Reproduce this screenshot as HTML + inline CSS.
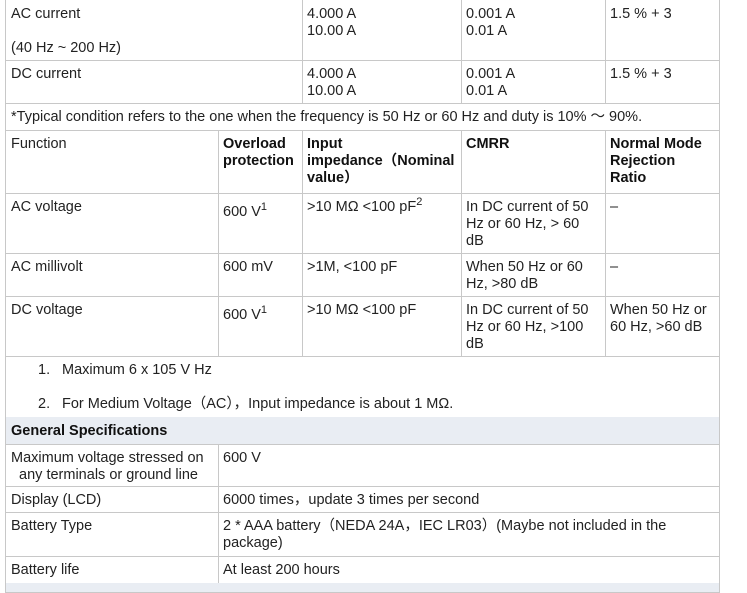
<!DOCTYPE html>
<html><head><meta charset="utf-8"><style>
body{margin:0;width:747px;height:585px;background:#fff;position:relative;overflow:hidden;font-family:"Liberation Sans","Noto Sans CJK SC",sans-serif;font-size:14.5px;line-height:17px;color:#222;white-space:nowrap}
.c{position:absolute;box-sizing:border-box;border-right:1px solid #c8c8c8;border-bottom:1px solid #c8c8c8;padding:6px 0 0 5px;overflow:hidden}
.l{border-left:1px solid #c8c8c8}
b{font-weight:bold;color:#111}
sup{font-size:11px;line-height:0;vertical-align:6px}
.g{background:#e9edf3}
</style></head><body>
<div class="c l" style="left:5px;top:-2px;width:298px;height:63px;padding-top:8px">AC current<br><br>(40 Hz ~ 200 Hz)</div>
<div class="c" style="left:302px;top:-2px;width:160px;height:63px;padding-top:8px">4.000 A<br>10.00 A</div>
<div class="c" style="left:461px;top:-2px;width:145px;height:63px;padding-top:8px">0.001 A<br>0.01 A</div>
<div class="c" style="left:605px;top:-2px;width:115px;height:63px;padding-top:8px">1.5 % + 3</div>
<div class="c l" style="left:5px;top:60px;width:298px;height:44px">DC current</div>
<div class="c" style="left:302px;top:60px;width:160px;height:44px">4.000 A<br>10.00 A</div>
<div class="c" style="left:461px;top:60px;width:145px;height:44px">0.001 A<br>0.01 A</div>
<div class="c" style="left:605px;top:60px;width:115px;height:44px">1.5 % + 3</div>
<div class="c l" style="left:5px;top:103px;width:715px;height:28px">*Typical condition refers to the one when the frequency is 50 Hz or 60 Hz and duty is 10% ～ 90%.</div>
<div class="c l" style="left:5px;top:130px;width:214px;height:64px">Function</div>
<div class="c" style="left:218px;top:130px;width:85px;height:64px"><b>Overload<br>protection</b></div>
<div class="c" style="left:302px;top:130px;width:160px;height:64px"><b>Input<br>impedance（Nominal<br>value）</b></div>
<div class="c" style="left:461px;top:130px;width:145px;height:64px"><b>CMRR</b></div>
<div class="c" style="left:605px;top:130px;width:115px;height:64px"><b>Normal Mode<br>Rejection<br>Ratio</b></div>
<div class="c l" style="left:5px;top:193px;width:214px;height:61px">AC voltage</div>
<div class="c" style="left:218px;top:193px;width:85px;height:61px;padding-top:11px">600 V<sup>1</sup></div>
<div class="c" style="left:302px;top:193px;width:160px;height:61px">&gt;10 MΩ &lt;100 pF<sup>2</sup></div>
<div class="c" style="left:461px;top:193px;width:145px;height:61px">In DC current of 50<br>Hz or 60 Hz, &gt; 60<br>dB</div>
<div class="c" style="left:605px;top:193px;width:115px;height:61px">–</div>
<div class="c l" style="left:5px;top:253px;width:214px;height:44px">AC millivolt</div>
<div class="c" style="left:218px;top:253px;width:85px;height:44px">600 mV</div>
<div class="c" style="left:302px;top:253px;width:160px;height:44px">&gt;1M, &lt;100 pF</div>
<div class="c" style="left:461px;top:253px;width:145px;height:44px">When 50 Hz or 60<br>Hz, &gt;80 dB</div>
<div class="c" style="left:605px;top:253px;width:115px;height:44px">–</div>
<div class="c l" style="left:5px;top:296px;width:214px;height:61px">DC voltage</div>
<div class="c" style="left:218px;top:296px;width:85px;height:61px;padding-top:11px">600 V<sup>1</sup></div>
<div class="c" style="left:302px;top:296px;width:160px;height:61px">&gt;10 MΩ &lt;100 pF</div>
<div class="c" style="left:461px;top:296px;width:145px;height:61px">In DC current of 50<br>Hz or 60 Hz, &gt;100<br>dB</div>
<div class="c" style="left:605px;top:296px;width:115px;height:61px">When 50 Hz or<br>60 Hz, &gt;60 dB</div>
<div class="c l" style="left:5px;top:356px;width:715px;height:62px;padding:0">
<div style="position:absolute;left:32px;top:6px">1.</div><div style="position:absolute;left:56px;top:6px">Maximum 6 x 105 V Hz</div>
<div style="position:absolute;left:32px;top:40px">2.</div><div style="position:absolute;left:56px;top:40px">For Medium Voltage（AC），Input impedance is about 1 MΩ.</div>
</div>
<div class="c l g" style="left:5px;top:417px;width:715px;height:28px"><b>General Specifications</b></div>
<div class="c l" style="left:5px;top:444px;width:214px;height:43px">Maximum voltage stressed on<br>&nbsp;&nbsp;any terminals or ground line</div>
<div class="c" style="left:218px;top:444px;width:502px;height:43px">600 V</div>
<div class="c l" style="left:5px;top:486px;width:214px;height:27px">Display (LCD)</div>
<div class="c" style="left:218px;top:486px;width:502px;height:27px">6000 times，update 3 times per second</div>
<div class="c l" style="left:5px;top:512px;width:214px;height:45px">Battery Type</div>
<div class="c" style="left:218px;top:512px;width:502px;height:45px">2 * AAA battery（NEDA 24A，IEC LR03）(Maybe not included in the<br>package)</div>
<div class="c l" style="left:5px;top:556px;width:214px;height:28px">Battery life</div>
<div class="c" style="left:218px;top:556px;width:502px;height:28px">At least 200 hours</div>
<div class="c l g" style="left:5px;top:583px;width:715px;height:10px"></div>
</body></html>
